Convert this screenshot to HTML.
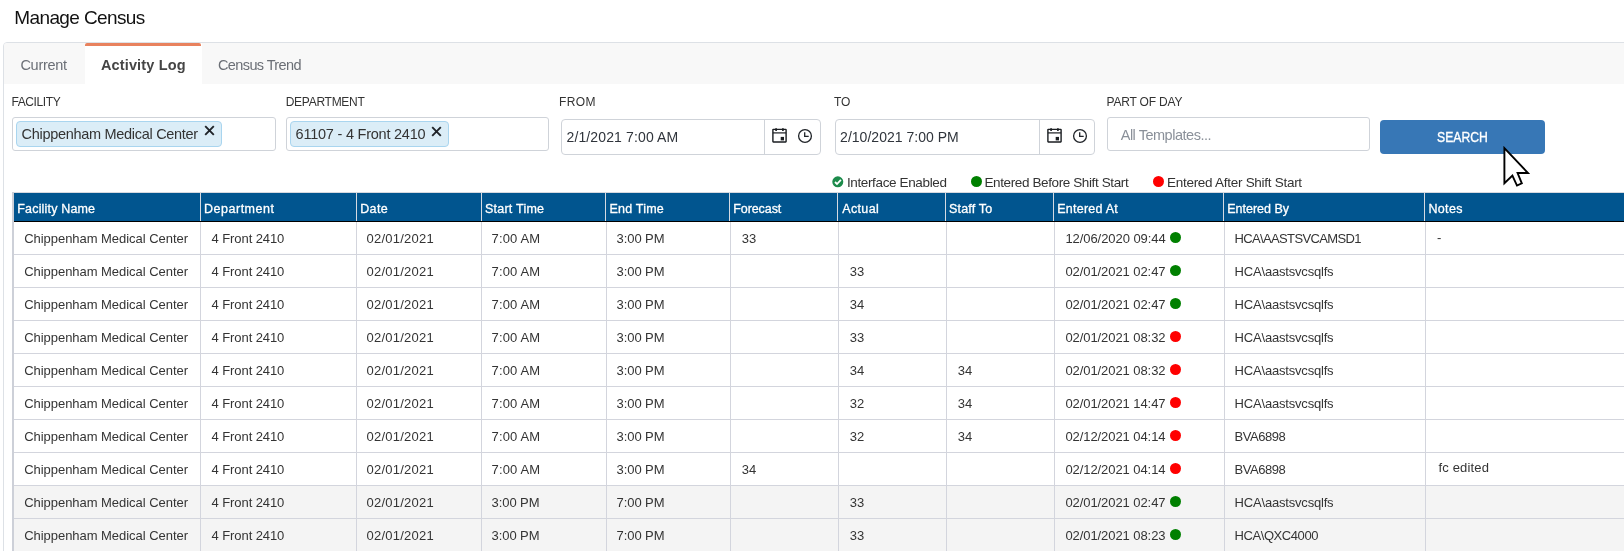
<!DOCTYPE html>
<html><head><meta charset="utf-8">
<style>
*{box-sizing:border-box}
html,body{margin:0;padding:0;width:1624px;height:551px;overflow:hidden;background:#fff;font-family:"Liberation Sans",sans-serif;color:#333}
.a{position:absolute}
.t{position:absolute;white-space:nowrap;line-height:1}
.dot{position:absolute;width:11px;height:11px;border-radius:50%}
</style></head><body><div id="root" style="position:absolute;left:0;top:0;width:1624px;height:551px;will-change:transform">
<div class="a" style="left:3px;top:42px;width:1700px;height:600px;border:1px solid #dde1e6;border-radius:4px 0 0 0"></div>
<div class="a" style="left:4px;top:43px;width:1700px;height:41px;background:#f8f8f8;border-radius:3px 0 0 0"></div>
<div class="a" style="left:85px;top:43px;width:117px;height:41px;background:#fff"></div>
<div class="a" style="left:85px;top:43px;width:116px;height:3px;background:#e8825e;border-radius:2px 2px 0 0"></div>
<div class="t" style="left:14.3px;top:8.0px;font-size:19px;letter-spacing:-0.62px;color:#111">Manage Census</div>
<div class="t" style="left:20.4px;top:57.7px;font-size:14.5px;letter-spacing:-0.27px;color:#6b6f76">Current</div>
<div class="t" style="left:100.9px;top:57.7px;font-size:14.5px;letter-spacing:0.15px;color:#454545;font-weight:bold">Activity Log</div>
<div class="t" style="left:218.0px;top:57.7px;font-size:14.5px;letter-spacing:-0.61px;color:#6b6f76">Census Trend</div>
<div class="t" style="left:11.4px;top:95.8px;font-size:12px;letter-spacing:-0.39px;color:#333">FACILITY</div>
<div class="t" style="left:285.7px;top:95.8px;font-size:12px;letter-spacing:-0.27px;color:#333">DEPARTMENT</div>
<div class="t" style="left:558.9px;top:95.8px;font-size:12px;letter-spacing:0.43px;color:#333">FROM</div>
<div class="t" style="left:834.0px;top:95.8px;font-size:12px;letter-spacing:0.0px;color:#333">TO</div>
<div class="t" style="left:1106.5px;top:95.8px;font-size:12px;letter-spacing:-0.18px;color:#333">PART OF DAY</div>
<div class="a" style="left:12px;top:117px;width:264px;height:34px;border:1px solid #cfd3d9;border-radius:3px;background:#fff"></div>
<div class="a" style="left:16px;top:121px;width:206px;height:26px;border:1px solid #a9d5ef;border-radius:4px;background:#dbedf7"></div>
<div class="a" style="left:286px;top:117px;width:263px;height:34px;border:1px solid #cfd3d9;border-radius:3px;background:#fff"></div>
<div class="a" style="left:290px;top:121px;width:159px;height:26px;border:1px solid #a9d5ef;border-radius:4px;background:#dbedf7"></div>
<div class="t" style="left:21.6px;top:126.7px;font-size:14.5px;letter-spacing:-0.3px;color:#333">Chippenham Medical Center</div>
<div class="t" style="left:295.6px;top:126.7px;font-size:14.5px;letter-spacing:-0.23px;color:#333">61107 - 4 Front 2410</div>
<svg class="a" style="left:203.8px;top:125.4px" width="11" height="11" viewBox="0 0 11 11"><path d="M1.2 1.2L9.8 9.8M9.8 1.2L1.2 9.8" stroke="#1f2328" stroke-width="1.9" stroke-linecap="butt"/></svg>
<svg class="a" style="left:430.8px;top:126.2px" width="11" height="11" viewBox="0 0 11 11"><path d="M1.2 1.2L9.8 9.8M9.8 1.2L1.2 9.8" stroke="#1f2328" stroke-width="1.9" stroke-linecap="butt"/></svg>
<div class="a" style="left:561px;top:119px;width:260px;height:36px;border:1px solid #cfd3d9;border-radius:4px;background:#fff"></div>
<div class="a" style="left:764px;top:120px;width:1px;height:34px;background:#cfd3d9"></div>
<svg class="a" style="left:772px;top:127.3px" width="16" height="16" viewBox="0 0 16 16"><g fill="none" stroke="#1a1d21" stroke-width="1.4"><rect x="0.9" y="2.4" width="13.2" height="12.6" rx="0.4"/><line x1="0.9" y1="5.9" x2="14.1" y2="5.9" stroke-width="1.2"/></g><g fill="#1a1d21"><rect x="3.2" y="1.3" width="1.8" height="2.6"/><rect x="10" y="1.3" width="1.8" height="2.6"/><rect x="8.7" y="9.9" width="3.3" height="3.5"/></g></svg>
<svg class="a" style="left:797.4px;top:127.6px" width="16" height="16" viewBox="0 0 16 16"><g fill="none" stroke="#1f2328" stroke-width="1.3"><circle cx="8" cy="8" r="6.4"/><path d="M7.7 4.3v4.1h4"/></g></svg>
<div class="a" style="left:835px;top:119px;width:260px;height:36px;border:1px solid #cfd3d9;border-radius:4px;background:#fff"></div>
<div class="a" style="left:1039px;top:120px;width:1px;height:34px;background:#cfd3d9"></div>
<svg class="a" style="left:1047px;top:127.3px" width="16" height="16" viewBox="0 0 16 16"><g fill="none" stroke="#1a1d21" stroke-width="1.4"><rect x="0.9" y="2.4" width="13.2" height="12.6" rx="0.4"/><line x1="0.9" y1="5.9" x2="14.1" y2="5.9" stroke-width="1.2"/></g><g fill="#1a1d21"><rect x="3.2" y="1.3" width="1.8" height="2.6"/><rect x="10" y="1.3" width="1.8" height="2.6"/><rect x="8.7" y="9.9" width="3.3" height="3.5"/></g></svg>
<svg class="a" style="left:1072.4px;top:127.6px" width="16" height="16" viewBox="0 0 16 16"><g fill="none" stroke="#1f2328" stroke-width="1.3"><circle cx="8" cy="8" r="6.4"/><path d="M7.7 4.3v4.1h4"/></g></svg>
<div class="t" style="left:566.5px;top:130.1px;font-size:14.0px;letter-spacing:0.13px;color:#2f343b">2/1/2021 7:00 AM</div>
<div class="t" style="left:840.1px;top:130.1px;font-size:14.0px;letter-spacing:0.02px;color:#2f343b">2/10/2021 7:00 PM</div>
<div class="a" style="left:1107px;top:117px;width:263px;height:34px;border:1px solid #cfd3d9;border-radius:3px;background:#fff"></div>
<div class="t" style="left:1120.7px;top:127.7px;font-size:14.5px;letter-spacing:-0.48px;color:#8a9099">All Templates...</div>
<div class="a" style="left:1380px;top:120px;width:165px;height:34px;background:#3777b6;border-radius:4px"></div>
<div class="t" style="left:1436.9px;top:129.7px;font-size:14.5px;letter-spacing:0px;color:#fff;transform:scaleX(0.841);transform-origin:0 0;-webkit-text-stroke:0.35px #fff">SEARCH</div>
<svg class="a" style="left:832.3px;top:175.5px" width="12" height="12" viewBox="0 0 12 12"><circle cx="5.8" cy="5.8" r="5.5" fill="#1c8b4b"/><path d="M3 6l2 2 3.9-4.1" fill="none" stroke="#fff" stroke-width="1.8"/></svg>
<div class="t" style="left:846.9px;top:175.6px;font-size:13.5px;letter-spacing:-0.36px;color:#333">Interface Enabled</div>
<div class="dot" style="left:971px;top:176px;background:#008000"></div>
<div class="t" style="left:984.4px;top:175.6px;font-size:13.5px;letter-spacing:-0.38px;color:#333">Entered Before Shift Start</div>
<div class="dot" style="left:1153px;top:176px;background:#ff0000"></div>
<div class="t" style="left:1167.0px;top:175.6px;font-size:13.5px;letter-spacing:-0.28px;color:#333">Entered After Shift Start</div>
<div class="a" style="left:12px;top:192px;width:1612px;height:1px;background:#d6d9e0"></div>
<div class="a" style="left:14px;top:193px;width:1610px;height:28px;background:#01558f"></div>
<div class="a" style="left:12px;top:221px;width:1612px;height:1px;background:#000"></div>
<div class="a" style="left:200px;top:193px;width:1px;height:28px;background:#d5dae2"></div>
<div class="a" style="left:356px;top:193px;width:1px;height:28px;background:#d5dae2"></div>
<div class="a" style="left:481px;top:193px;width:1px;height:28px;background:#d5dae2"></div>
<div class="a" style="left:605px;top:193px;width:1px;height:28px;background:#d5dae2"></div>
<div class="a" style="left:729px;top:193px;width:1px;height:28px;background:#d5dae2"></div>
<div class="a" style="left:837px;top:193px;width:1px;height:28px;background:#d5dae2"></div>
<div class="a" style="left:945px;top:193px;width:1px;height:28px;background:#d5dae2"></div>
<div class="a" style="left:1053px;top:193px;width:1px;height:28px;background:#d5dae2"></div>
<div class="a" style="left:1223px;top:193px;width:1px;height:28px;background:#d5dae2"></div>
<div class="a" style="left:1424px;top:193px;width:1px;height:28px;background:#d5dae2"></div>
<div class="t" style="left:17.3px;top:203.4px;font-size:12.5px;letter-spacing:0.17px;color:#fff;-webkit-text-stroke:0.3px #fff">Facility Name</div>
<div class="t" style="left:204.1px;top:203.4px;font-size:12.5px;letter-spacing:0.5px;color:#fff;-webkit-text-stroke:0.3px #fff">Department</div>
<div class="t" style="left:360.2px;top:203.4px;font-size:12.5px;letter-spacing:0.4px;color:#fff;-webkit-text-stroke:0.3px #fff">Date</div>
<div class="t" style="left:485.0px;top:203.4px;font-size:12.5px;letter-spacing:0.23px;color:#fff;-webkit-text-stroke:0.3px #fff">Start Time</div>
<div class="t" style="left:609.5px;top:203.4px;font-size:12.5px;letter-spacing:0.2px;color:#fff;-webkit-text-stroke:0.3px #fff">End Time</div>
<div class="t" style="left:733.2px;top:203.4px;font-size:12.5px;letter-spacing:-0.07px;color:#fff;-webkit-text-stroke:0.3px #fff">Forecast</div>
<div class="t" style="left:842.2px;top:203.4px;font-size:12.5px;letter-spacing:0.36px;color:#fff;-webkit-text-stroke:0.3px #fff">Actual</div>
<div class="t" style="left:949.1px;top:203.4px;font-size:12.5px;letter-spacing:0.17px;color:#fff;-webkit-text-stroke:0.3px #fff">Staff To</div>
<div class="t" style="left:1057.3px;top:203.4px;font-size:12.5px;letter-spacing:0.23px;color:#fff;-webkit-text-stroke:0.3px #fff">Entered At</div>
<div class="t" style="left:1227.2px;top:203.4px;font-size:12.5px;letter-spacing:0.01px;color:#fff;-webkit-text-stroke:0.3px #fff">Entered By</div>
<div class="t" style="left:1428.4px;top:203.4px;font-size:12.5px;letter-spacing:0.35px;color:#fff;-webkit-text-stroke:0.3px #fff">Notes</div>
<div class="a" style="left:14px;top:254px;width:1610px;height:1px;background:#d3d5dd"></div>
<div class="t" style="left:24.2px;top:232.0px;font-size:13px;letter-spacing:-0.04px;color:#343434">Chippenham Medical Center</div>
<div class="t" style="left:211.6px;top:232.0px;font-size:13px;letter-spacing:-0.09px;color:#343434">4 Front 2410</div>
<div class="t" style="left:366.6px;top:232.0px;font-size:13px;letter-spacing:0.22px;color:#343434">02/01/2021</div>
<div class="t" style="left:491.6px;top:232.0px;font-size:13px;letter-spacing:0.13px;color:#343434">7:00 AM</div>
<div class="t" style="left:616.6px;top:232.0px;font-size:13px;letter-spacing:-0.08px;color:#343434">3:00 PM</div>
<div class="t" style="left:741.8px;top:232.0px;font-size:13px;letter-spacing:0px;color:#343434">33</div>
<div class="t" style="left:1065.4px;top:232.0px;font-size:13px;letter-spacing:-0.06px;color:#343434">12/06/2020 09:44</div>
<div class="t" style="left:1234.6px;top:232.0px;font-size:13px;letter-spacing:-0.65px;color:#343434">HCA\AASTSVCAMSD1</div>
<div class="t" style="left:1437.0px;top:231.0px;font-size:13px;letter-spacing:0.0px;color:#343434">-</div>
<div class="dot" style="left:1170px;top:231.6px;background:#008000"></div>
<div class="a" style="left:14px;top:287px;width:1610px;height:1px;background:#d3d5dd"></div>
<div class="t" style="left:24.2px;top:265.0px;font-size:13px;letter-spacing:-0.04px;color:#343434">Chippenham Medical Center</div>
<div class="t" style="left:211.6px;top:265.0px;font-size:13px;letter-spacing:-0.09px;color:#343434">4 Front 2410</div>
<div class="t" style="left:366.6px;top:265.0px;font-size:13px;letter-spacing:0.22px;color:#343434">02/01/2021</div>
<div class="t" style="left:491.6px;top:265.0px;font-size:13px;letter-spacing:0.13px;color:#343434">7:00 AM</div>
<div class="t" style="left:616.6px;top:265.0px;font-size:13px;letter-spacing:-0.08px;color:#343434">3:00 PM</div>
<div class="t" style="left:849.8px;top:265.0px;font-size:13px;letter-spacing:0px;color:#343434">33</div>
<div class="t" style="left:1065.4px;top:265.0px;font-size:13px;letter-spacing:-0.07px;color:#343434">02/01/2021 02:47</div>
<div class="t" style="left:1234.6px;top:265.0px;font-size:13px;letter-spacing:-0.19px;color:#343434">HCA\aastsvcsqlfs</div>
<div class="dot" style="left:1170px;top:264.6px;background:#008000"></div>
<div class="a" style="left:14px;top:320px;width:1610px;height:1px;background:#d3d5dd"></div>
<div class="t" style="left:24.2px;top:298.0px;font-size:13px;letter-spacing:-0.04px;color:#343434">Chippenham Medical Center</div>
<div class="t" style="left:211.6px;top:298.0px;font-size:13px;letter-spacing:-0.09px;color:#343434">4 Front 2410</div>
<div class="t" style="left:366.6px;top:298.0px;font-size:13px;letter-spacing:0.22px;color:#343434">02/01/2021</div>
<div class="t" style="left:491.6px;top:298.0px;font-size:13px;letter-spacing:0.13px;color:#343434">7:00 AM</div>
<div class="t" style="left:616.6px;top:298.0px;font-size:13px;letter-spacing:-0.08px;color:#343434">3:00 PM</div>
<div class="t" style="left:849.8px;top:298.0px;font-size:13px;letter-spacing:0px;color:#343434">34</div>
<div class="t" style="left:1065.4px;top:298.0px;font-size:13px;letter-spacing:-0.07px;color:#343434">02/01/2021 02:47</div>
<div class="t" style="left:1234.6px;top:298.0px;font-size:13px;letter-spacing:-0.19px;color:#343434">HCA\aastsvcsqlfs</div>
<div class="dot" style="left:1170px;top:297.6px;background:#008000"></div>
<div class="a" style="left:14px;top:353px;width:1610px;height:1px;background:#d3d5dd"></div>
<div class="t" style="left:24.2px;top:331.0px;font-size:13px;letter-spacing:-0.04px;color:#343434">Chippenham Medical Center</div>
<div class="t" style="left:211.6px;top:331.0px;font-size:13px;letter-spacing:-0.09px;color:#343434">4 Front 2410</div>
<div class="t" style="left:366.6px;top:331.0px;font-size:13px;letter-spacing:0.22px;color:#343434">02/01/2021</div>
<div class="t" style="left:491.6px;top:331.0px;font-size:13px;letter-spacing:0.13px;color:#343434">7:00 AM</div>
<div class="t" style="left:616.6px;top:331.0px;font-size:13px;letter-spacing:-0.08px;color:#343434">3:00 PM</div>
<div class="t" style="left:849.8px;top:331.0px;font-size:13px;letter-spacing:0px;color:#343434">33</div>
<div class="t" style="left:1065.4px;top:331.0px;font-size:13px;letter-spacing:-0.07px;color:#343434">02/01/2021 08:32</div>
<div class="t" style="left:1234.6px;top:331.0px;font-size:13px;letter-spacing:-0.19px;color:#343434">HCA\aastsvcsqlfs</div>
<div class="dot" style="left:1170px;top:330.6px;background:#ff0000"></div>
<div class="a" style="left:14px;top:386px;width:1610px;height:1px;background:#d3d5dd"></div>
<div class="t" style="left:24.2px;top:364.0px;font-size:13px;letter-spacing:-0.04px;color:#343434">Chippenham Medical Center</div>
<div class="t" style="left:211.6px;top:364.0px;font-size:13px;letter-spacing:-0.09px;color:#343434">4 Front 2410</div>
<div class="t" style="left:366.6px;top:364.0px;font-size:13px;letter-spacing:0.22px;color:#343434">02/01/2021</div>
<div class="t" style="left:491.6px;top:364.0px;font-size:13px;letter-spacing:0.13px;color:#343434">7:00 AM</div>
<div class="t" style="left:616.6px;top:364.0px;font-size:13px;letter-spacing:-0.08px;color:#343434">3:00 PM</div>
<div class="t" style="left:849.8px;top:364.0px;font-size:13px;letter-spacing:0px;color:#343434">34</div>
<div class="t" style="left:957.8px;top:364.0px;font-size:13px;letter-spacing:0px;color:#343434">34</div>
<div class="t" style="left:1065.4px;top:364.0px;font-size:13px;letter-spacing:-0.07px;color:#343434">02/01/2021 08:32</div>
<div class="t" style="left:1234.6px;top:364.0px;font-size:13px;letter-spacing:-0.19px;color:#343434">HCA\aastsvcsqlfs</div>
<div class="dot" style="left:1170px;top:363.6px;background:#ff0000"></div>
<div class="a" style="left:14px;top:419px;width:1610px;height:1px;background:#d3d5dd"></div>
<div class="t" style="left:24.2px;top:397.0px;font-size:13px;letter-spacing:-0.04px;color:#343434">Chippenham Medical Center</div>
<div class="t" style="left:211.6px;top:397.0px;font-size:13px;letter-spacing:-0.09px;color:#343434">4 Front 2410</div>
<div class="t" style="left:366.6px;top:397.0px;font-size:13px;letter-spacing:0.22px;color:#343434">02/01/2021</div>
<div class="t" style="left:491.6px;top:397.0px;font-size:13px;letter-spacing:0.13px;color:#343434">7:00 AM</div>
<div class="t" style="left:616.6px;top:397.0px;font-size:13px;letter-spacing:-0.08px;color:#343434">3:00 PM</div>
<div class="t" style="left:849.8px;top:397.0px;font-size:13px;letter-spacing:0px;color:#343434">32</div>
<div class="t" style="left:957.8px;top:397.0px;font-size:13px;letter-spacing:0px;color:#343434">34</div>
<div class="t" style="left:1065.4px;top:397.0px;font-size:13px;letter-spacing:-0.07px;color:#343434">02/01/2021 14:47</div>
<div class="t" style="left:1234.6px;top:397.0px;font-size:13px;letter-spacing:-0.19px;color:#343434">HCA\aastsvcsqlfs</div>
<div class="dot" style="left:1170px;top:396.6px;background:#ff0000"></div>
<div class="a" style="left:14px;top:452px;width:1610px;height:1px;background:#d3d5dd"></div>
<div class="t" style="left:24.2px;top:430.0px;font-size:13px;letter-spacing:-0.04px;color:#343434">Chippenham Medical Center</div>
<div class="t" style="left:211.6px;top:430.0px;font-size:13px;letter-spacing:-0.09px;color:#343434">4 Front 2410</div>
<div class="t" style="left:366.6px;top:430.0px;font-size:13px;letter-spacing:0.22px;color:#343434">02/01/2021</div>
<div class="t" style="left:491.6px;top:430.0px;font-size:13px;letter-spacing:0.13px;color:#343434">7:00 AM</div>
<div class="t" style="left:616.6px;top:430.0px;font-size:13px;letter-spacing:-0.08px;color:#343434">3:00 PM</div>
<div class="t" style="left:849.8px;top:430.0px;font-size:13px;letter-spacing:0px;color:#343434">32</div>
<div class="t" style="left:957.8px;top:430.0px;font-size:13px;letter-spacing:0px;color:#343434">34</div>
<div class="t" style="left:1065.4px;top:430.0px;font-size:13px;letter-spacing:-0.07px;color:#343434">02/12/2021 04:14</div>
<div class="t" style="left:1234.6px;top:430.0px;font-size:13px;letter-spacing:-0.47px;color:#343434">BVA6898</div>
<div class="dot" style="left:1170px;top:429.6px;background:#ff0000"></div>
<div class="a" style="left:14px;top:485px;width:1610px;height:1px;background:#d3d5dd"></div>
<div class="t" style="left:24.2px;top:463.0px;font-size:13px;letter-spacing:-0.04px;color:#343434">Chippenham Medical Center</div>
<div class="t" style="left:211.6px;top:463.0px;font-size:13px;letter-spacing:-0.09px;color:#343434">4 Front 2410</div>
<div class="t" style="left:366.6px;top:463.0px;font-size:13px;letter-spacing:0.22px;color:#343434">02/01/2021</div>
<div class="t" style="left:491.6px;top:463.0px;font-size:13px;letter-spacing:0.13px;color:#343434">7:00 AM</div>
<div class="t" style="left:616.6px;top:463.0px;font-size:13px;letter-spacing:-0.08px;color:#343434">3:00 PM</div>
<div class="t" style="left:741.8px;top:463.0px;font-size:13px;letter-spacing:0px;color:#343434">34</div>
<div class="t" style="left:1065.4px;top:463.0px;font-size:13px;letter-spacing:-0.07px;color:#343434">02/12/2021 04:14</div>
<div class="t" style="left:1234.6px;top:463.0px;font-size:13px;letter-spacing:-0.47px;color:#343434">BVA6898</div>
<div class="t" style="left:1438.5px;top:461.0px;font-size:13px;letter-spacing:0.16px;color:#343434">fc edited</div>
<div class="dot" style="left:1170px;top:462.6px;background:#ff0000"></div>
<div class="a" style="left:14px;top:486px;width:1610px;height:32px;background:#f4f4f4"></div>
<div class="a" style="left:14px;top:518px;width:1610px;height:1px;background:#d3d5dd"></div>
<div class="t" style="left:24.2px;top:496.0px;font-size:13px;letter-spacing:-0.04px;color:#343434">Chippenham Medical Center</div>
<div class="t" style="left:211.6px;top:496.0px;font-size:13px;letter-spacing:-0.09px;color:#343434">4 Front 2410</div>
<div class="t" style="left:366.6px;top:496.0px;font-size:13px;letter-spacing:0.22px;color:#343434">02/01/2021</div>
<div class="t" style="left:491.6px;top:496.0px;font-size:13px;letter-spacing:-0.08px;color:#343434">3:00 PM</div>
<div class="t" style="left:616.6px;top:496.0px;font-size:13px;letter-spacing:-0.08px;color:#343434">7:00 PM</div>
<div class="t" style="left:849.8px;top:496.0px;font-size:13px;letter-spacing:0px;color:#343434">33</div>
<div class="t" style="left:1065.4px;top:496.0px;font-size:13px;letter-spacing:-0.07px;color:#343434">02/01/2021 02:47</div>
<div class="t" style="left:1234.6px;top:496.0px;font-size:13px;letter-spacing:-0.19px;color:#343434">HCA\aastsvcsqlfs</div>
<div class="dot" style="left:1170px;top:495.6px;background:#008000"></div>
<div class="a" style="left:14px;top:519px;width:1610px;height:32px;background:#f4f4f4"></div>
<div class="a" style="left:14px;top:551px;width:1610px;height:1px;background:#d3d5dd"></div>
<div class="t" style="left:24.2px;top:529.0px;font-size:13px;letter-spacing:-0.04px;color:#343434">Chippenham Medical Center</div>
<div class="t" style="left:211.6px;top:529.0px;font-size:13px;letter-spacing:-0.09px;color:#343434">4 Front 2410</div>
<div class="t" style="left:366.6px;top:529.0px;font-size:13px;letter-spacing:0.22px;color:#343434">02/01/2021</div>
<div class="t" style="left:491.6px;top:529.0px;font-size:13px;letter-spacing:-0.08px;color:#343434">3:00 PM</div>
<div class="t" style="left:616.6px;top:529.0px;font-size:13px;letter-spacing:-0.08px;color:#343434">7:00 PM</div>
<div class="t" style="left:849.8px;top:529.0px;font-size:13px;letter-spacing:0px;color:#343434">33</div>
<div class="t" style="left:1065.4px;top:529.0px;font-size:13px;letter-spacing:-0.07px;color:#343434">02/01/2021 08:23</div>
<div class="t" style="left:1234.6px;top:529.0px;font-size:13px;letter-spacing:-0.43px;color:#343434">HCA\QXC4000</div>
<div class="dot" style="left:1170px;top:528.6px;background:#008000"></div>
<div class="a" style="left:200px;top:222px;width:1px;height:330px;background:#d3d5dd"></div>
<div class="a" style="left:356px;top:222px;width:1px;height:330px;background:#d3d5dd"></div>
<div class="a" style="left:481px;top:222px;width:1px;height:330px;background:#d3d5dd"></div>
<div class="a" style="left:606px;top:222px;width:1px;height:330px;background:#d3d5dd"></div>
<div class="a" style="left:730px;top:222px;width:1px;height:330px;background:#d3d5dd"></div>
<div class="a" style="left:838px;top:222px;width:1px;height:330px;background:#d3d5dd"></div>
<div class="a" style="left:946px;top:222px;width:1px;height:330px;background:#d3d5dd"></div>
<div class="a" style="left:1054px;top:222px;width:1px;height:330px;background:#d3d5dd"></div>
<div class="a" style="left:1224px;top:222px;width:1px;height:330px;background:#d3d5dd"></div>
<div class="a" style="left:1425px;top:222px;width:1px;height:330px;background:#d3d5dd"></div>
<div class="a" style="left:12px;top:192px;width:2px;height:360px;background:#cdd0d8"></div>
<svg class="a" style="left:1501px;top:145px" width="32" height="44" viewBox="0 0 32 44"><path d="M3.4 3.2 L3.4 38.2 L11.4 30.6 L16 40.6 L20.8 38.3 L16.6 28 L27 28 Z" fill="#fff" stroke="#000" stroke-width="1.9" stroke-linejoin="miter"/></svg>
</div></body></html>
